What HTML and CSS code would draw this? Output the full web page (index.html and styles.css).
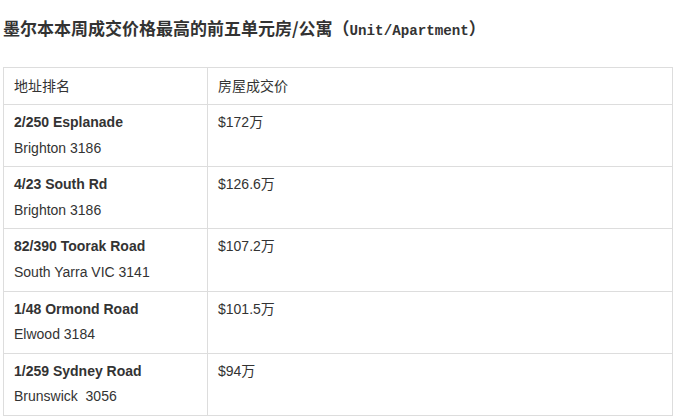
FILE: index.html
```html
<!DOCTYPE html>
<html lang="zh">
<head>
<meta charset="utf-8">
<title>墨尔本本周成交价格最高的前五单元房</title>
<link rel="stylesheet" href="styles.css">
</head>
<body>
<div class="page">
  <h3 class="title">墨尔本本周成交价格最高的前五单元房/公寓（<span class="latin">Unit/Apartment</span>）</h3>
  <table class="prices">
    <thead>
      <tr><th class="col-addr">地址排名</th><th>房屋成交价</th></tr>
    </thead>
    <tbody>
      <tr><td><b>2/250 Esplanade</b><br>Brighton 3186</td><td>$172万</td></tr>
      <tr><td><b>4/23 South Rd</b><br>Brighton 3186</td><td>$126.6万</td></tr>
      <tr><td><b>82/390 Toorak Road</b><br>South Yarra VIC 3141</td><td>$107.2万</td></tr>
      <tr><td><b>1/48 Ormond Road</b><br>Elwood 3184</td><td>$101.5万</td></tr>
      <tr><td><b>1/259 Sydney Road</b><br>Brunswick&nbsp; 3056</td><td>$94万</td></tr>
    </tbody>
  </table>
</div>
</body>
</html>
```

FILE: styles.css
```css
html, body {
  margin: 0;
  padding: 0;
  background: #fff;
}

.page {
  padding: 0 3px;
  font-family: "Liberation Sans", "Noto Sans CJK SC", sans-serif;
  color: #333;
}

.title {
  margin: 0;
  padding-top: 18px;
  height: 67px;
  box-sizing: border-box;
  font-family: "Noto Sans CJK SC", sans-serif;
  font-size: 17px;
  line-height: 20px;
  font-weight: bold;
  color: #333;
  letter-spacing: 0;
}

.title .latin {
  font-family: "Liberation Mono", monospace;
  font-size: 14.2px;
  font-weight: bold;
}

.prices {
  width: 670px;
  border-collapse: collapse;
  font-size: 14px;
  color: #333;
}

.prices th,
.prices td {
  border: 1px solid #ddd;
  text-align: left;
  vertical-align: top;
  padding: 5px 10px;
}

.prices th {
  font-weight: normal;
  line-height: 26px;
}

.prices td {
  line-height: 25.6px;
}

.prices .col-addr {
  width: 183px;
}

.prices b {
  font-weight: bold;
}
```
